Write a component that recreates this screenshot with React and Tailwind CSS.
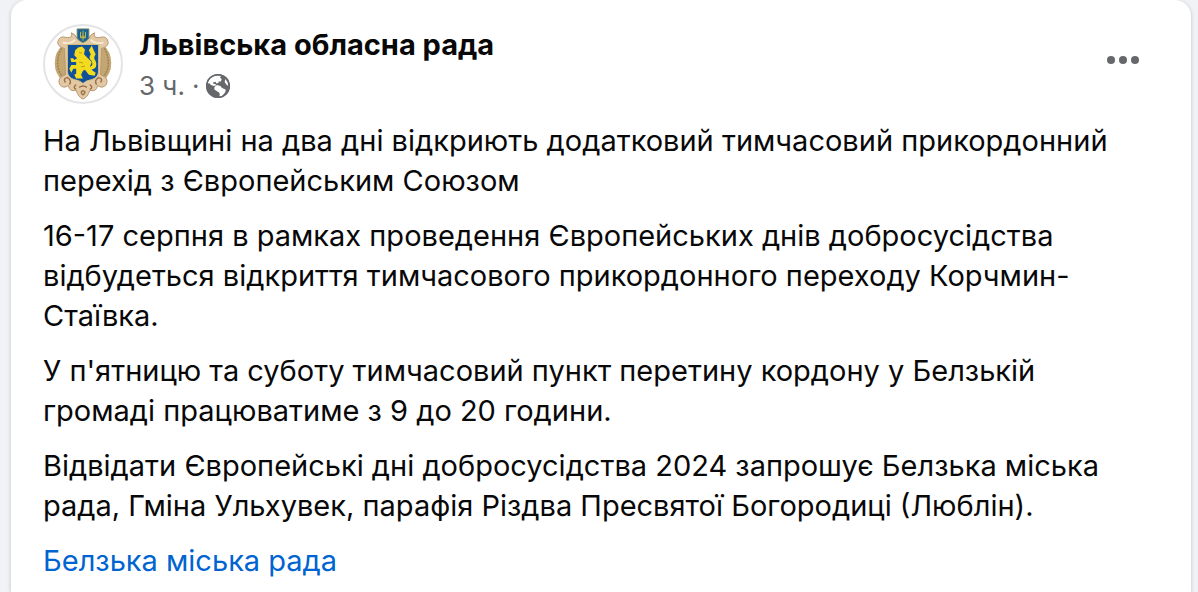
import React from 'react';

const paragraphs = [
  'На Львівщині на два дні відкриють додатковий тимчасовий прикордонний перехід з Європейським Союзом',
  '16-17 серпня в рамках проведення Європейських днів добросусідства відбудеться відкриття тимчасового прикордонного переходу Корчмин-Стаївка.',
  "У п'ятницю та суботу тимчасовий пункт перетину кордону у Белзькій громаді працюватиме з 9 до 20 години.",
  'Відвідати Європейські дні добросусідства 2024 запрошує Белзька міська рада, Гміна Ульхувек, парафія Різдва Пресвятої Богородиці (Люблін).',
];

const CoatOfArms = () => (
  <svg viewBox="1 1 78 78" className="w-full h-full" aria-hidden="true">
    {/* Side panels */}
    <path d="M20 20 Q11 27 11 39 Q11 51 20 58 L25 54 V22Z" fill="#c3a672" />
    <path d="M60 20 Q69 27 69 39 Q69 51 60 58 L55 54 V22Z" fill="#c3a672" />
    <path d="M18 24 Q14 31 14 39 T19 53 M62 24 Q66 31 66 39 T61 53" fill="none" stroke="#9b8150" strokeWidth="1.5" strokeDasharray="2 1" />
    {/* Carved cartouche */}
    <path d="M34 14 Q32 9 28 8 Q30 13 24 13 Q15 10 14 18 Q15 23 21 24 L22 51 Q13 54 16 61 Q20 66 25 62 Q26 69 33 67 Q35 74 40 76 Q45 74 47 67 Q54 69 55 62 Q60 66 64 61 Q67 54 58 51 L59 24 Q65 23 66 18 Q65 10 56 13 Q50 13 52 8 Q48 9 46 14Z" fill="#e2c8a5" stroke="#b8976d" strokeWidth="1" />
    <path d="M22 59 Q19 55 24 54 Q29 57 26 61 M58 59 Q61 55 56 54 Q51 57 54 61 M33 61 Q29 64 33 66 M47 61 Q51 64 47 66 M36 64 Q40 61 44 64 M38 69 Q40 66 42 69 Q40 74 38 69" fill="none" stroke="#9b7048" strokeWidth="1.5" />
    <path d="M19 18 Q28 20 32 15 M61 18 Q52 20 48 15" fill="none" stroke="#f7e8d0" strokeWidth="2" />
    {/* Lion shield */}
    <path d="M24 20 H56 V47 Q56 54 49 56 Q43 57 40 60 Q37 57 31 56 Q24 54 24 47Z" fill="#11519a" stroke="#d6c078" strokeWidth="1" />
    <path d="M35 23 L39 22 L42 25 L41 30 L45 34 L49 38 L47 43 L50 47 L53 49 L52 52 L46 51 L42 46 L40 47 L38 51 L40 55 L33 55 L31 51 L33 50 L33 45 L30 45 L28 49 L26 45 L28 41 L33 41 L33 38 L28 38 L27 34 L30 34 L31 36 L34 34 L31 31 L32 26Z" fill="#f3dc1e" />
    <path d="M47 43 Q51 42 49 37 Q45 34 48 30 L46 26 L49 21 L51 26 L53 30 Q50 34 53 37 Q56 45 48 46" fill="#f3dc1e" />
    <path d="M36 28 L39 29 M36 38 L40 39 M38 43 L42 42" stroke="#b59b20" strokeWidth="1" />
    {/* Trident shield */}
    <path d="M34 4 H46 V13 Q45 16 40 18 Q35 16 34 13Z" fill="#176293" stroke="#6e8464" strokeWidth="1" />
    <path d="M37.5 7 V13 H42.5 V7 M40 6 V16 M37.5 13 L40 11 L42.5 13" fill="none" stroke="#c9bd4d" strokeWidth="1" />
  </svg>
);

const GlobeIcon = () => (
  <svg viewBox="0 0 24 24" className="w-6 h-6" role="img" aria-label="Доступно всім">
    <circle cx="12" cy="12" r="12" fill="#65676b" />
    {/* North America */}
    <path d="M3.5 5 Q7 1.4 12 1.4 L15 2 L14 3.6 L15.6 5 L15 7.4 L12.6 7.4 L12.4 9 L10.6 9.4 L9.4 7.8 L7.4 8.2 L7.2 9.8 L9.2 10 L10.4 11.2 L8 12 L5 11 L3 9 L1.6 10 Q1.8 7 3.5 5Z" fill="#fff" />
    {/* South America */}
    <path d="M8.4 13 L11 11 L14.4 12 L16 14 L19.6 15.4 L19.4 18 L17.4 20.4 L15.4 22.4 L13.6 22.4 L13.6 19 L11.4 17.6 L8.4 15.4Z" fill="#fff" />
    <path d="M19.4 5 Q22.4 8 22.4 12 L20.4 10.6 L18.6 8Z" fill="#fff" />
    <circle cx="12" cy="12" r="11.3" fill="none" stroke="#65676b" strokeWidth="1.4" />
  </svg>
);

export default function App() {
  return (
    <main className="min-h-screen flex bg-[#f0f2f5] pl-[11px] pr-[7px] font-['Inter','Liberation_Sans',sans-serif] text-[#080809]">
      <article className="flex-1 min-w-0 bg-white rounded-t-2xl px-8 pt-6 shadow-[0_1px_4px_rgba(0,0,0,0.2)]">
        {/* Post header */}
        <header className="flex items-start">
          <a href="#page" aria-label="Львівська обласна рада" className="w-20 h-20 shrink-0 rounded-full border-2 border-[#e3e4e6] overflow-hidden">
            <CoatOfArms />
          </a>
          <div className="flex-1 min-w-0 ml-4 pt-px flex flex-col gap-px">
            <h2 className="text-[29px] leading-10 font-bold">
              <a href="#page">Львівська обласна рада</a>
            </h2>
            <div className="flex items-center gap-[7px] text-[26px] leading-10 text-[#65676b]">
              <a href="#post">3 ч.</a>
              <span>·</span>
              <GlobeIcon />
            </div>
          </div>
          <button type="button" aria-label="Дії з публікацією" className="mt-4 mr-4 p-1 text-[#65676b]">
            <svg viewBox="0 0 32 32" className="w-8 h-8" fill="currentColor">
              <circle cx="4" cy="16" r="4" />
              <circle cx="16" cy="16" r="4" />
              <circle cx="28" cy="16" r="4" />
            </svg>
          </button>
        </header>

        {/* Post text */}
        <div className="mt-[15px] pr-12 flex flex-col gap-[15px] text-[29px] leading-10">
          {paragraphs.map((text) => (
            <p key={text}>{text}</p>
          ))}
          <p>
            <a href="#belz" className="text-[#0064d1]">Белзька міська рада</a>
          </p>
        </div>
      </article>
    </main>
  );
}
